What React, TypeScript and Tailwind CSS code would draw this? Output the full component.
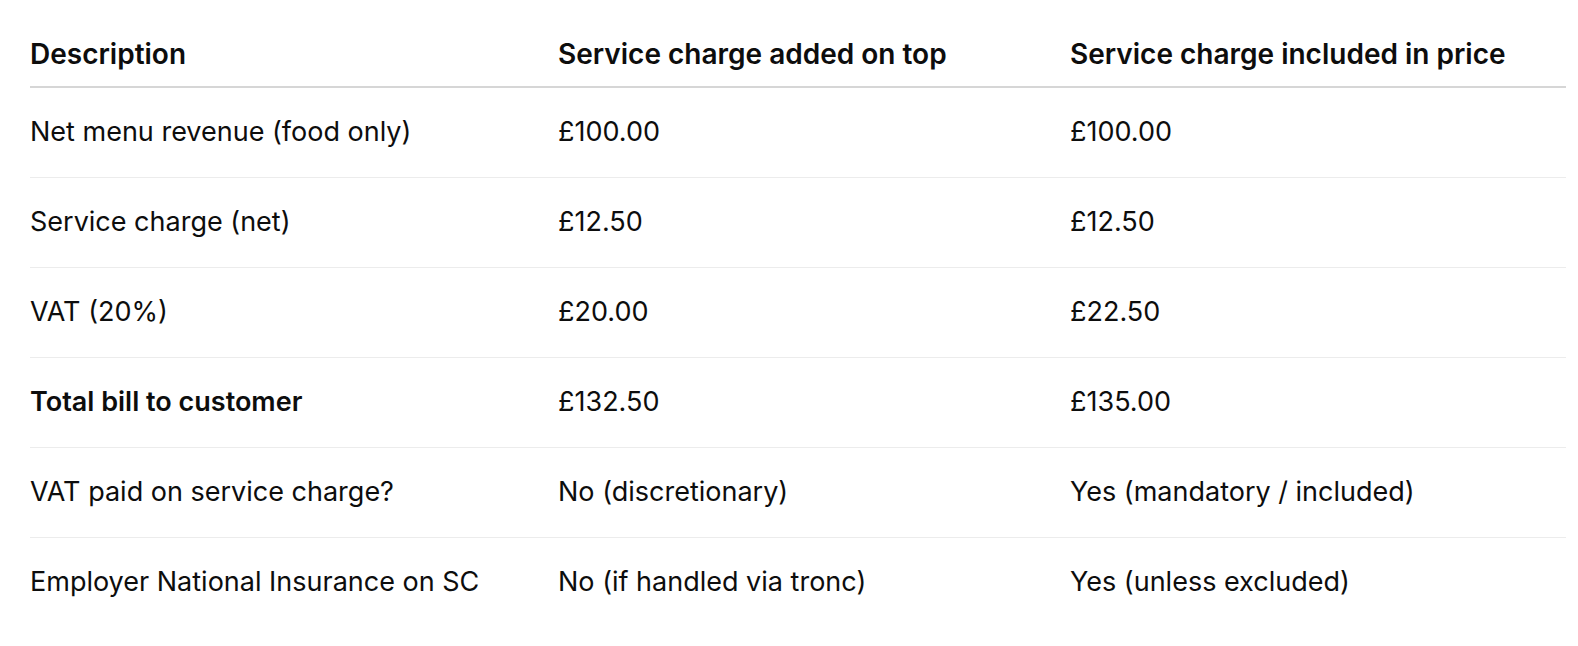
import React from "react";

const rows: [string, string, string, boolean?][] = [
  ["Net menu revenue (food only)", "£100.00", "£100.00"],
  ["Service charge (net)", "£12.50", "£12.50"],
  ["VAT (20%)", "£20.00", "£22.50"],
  ["Total bill to customer", "£132.50", "£135.00", true],
  ["VAT paid on service charge?", "No (discretionary)", "Yes (mandatory / included)"],
  ["Employer National Insurance on SC", "No (if handled via tronc)", "Yes (unless excluded)"],
];

export default function App() {
  return (
    <div
      className="w-[1578px] h-[646px] bg-white overflow-hidden pl-[30px] pr-[12px] pt-[21px] text-[#0d0d0d]"
      style={{ fontFamily: "Inter, 'Noto Sans', sans-serif" }}
    >
      <table className="w-[1536px] border-collapse text-left text-[27px] leading-[34px]">
        <thead>
          <tr className="border-b-2 border-[#d6d6d6]">
            <th className="w-[528px] h-[66px] p-0 text-[28px] font-semibold align-middle">Description</th>
            <th className="w-[512px] h-[66px] p-0 text-[28px] font-semibold align-middle">Service charge added on top</th>
            <th className="h-[66px] p-0 text-[28px] font-semibold align-middle">Service charge included in price</th>
          </tr>
        </thead>
        <tbody>
          {rows.map((r, i) => (
            <tr key={i} className={i < rows.length - 1 ? "border-b border-[#ececec]" : ""}>
              <td className={`h-[90px] p-0 align-middle ${r[3] ? "font-semibold" : "font-normal"}`}>{r[0]}</td>
              <td className="h-[90px] p-0 align-middle">{r[1]}</td>
              <td className="h-[90px] p-0 align-middle">{r[2]}</td>
            </tr>
          ))}
        </tbody>
      </table>
    </div>
  );
}
